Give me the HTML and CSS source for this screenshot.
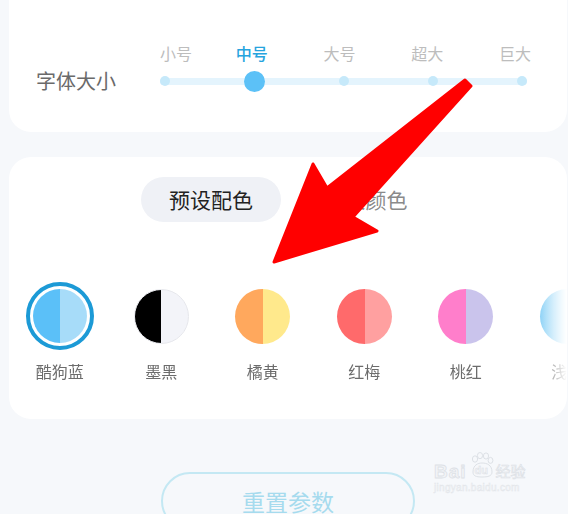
FILE: index.html
```html
<!DOCTYPE html>
<html lang="zh-CN">
<head>
    <meta charset="UTF-8">
    <meta name="viewport" content="width=device-width, initial-scale=1.0">
    <title>皮肤设置</title>
    <link rel="stylesheet" href="styles.css">
</head>
<body>
    <div class="page">
        <section class="card font-card">
            <div class="font-row">
                <span class="font-label">字体大小</span>
                <div class="slider">
                    <div class="slider-labels">
                        <span>小号</span>
                        <span class="active">中号</span>
                        <span>大号</span>
                        <span>超大</span>
                        <span>巨大</span>
                    </div>
                    <div class="slider-track">
                        <span class="stop"></span>
                        <span class="stop current"></span>
                        <span class="stop"></span>
                        <span class="stop"></span>
                        <span class="stop"></span>
                    </div>
                </div>
            </div>
        </section>

        <section class="card color-card">
            <div class="tabs">
                <span class="tab active">预设配色</span>
                <span class="tab">自定义颜色</span>
            </div>

            <div class="swatches">
                <div class="swatch selected">
                    <div class="swatch-ring"><span class="dot dot-blue"></span></div>
                    <span class="swatch-name">酷狗蓝</span>
                </div>
                <div class="swatch">
                    <div class="swatch-ring"><span class="dot dot-black"></span></div>
                    <span class="swatch-name">墨黑</span>
                </div>
                <div class="swatch">
                    <div class="swatch-ring"><span class="dot dot-orange"></span></div>
                    <span class="swatch-name">橘黄</span>
                </div>
                <div class="swatch">
                    <div class="swatch-ring"><span class="dot dot-red"></span></div>
                    <span class="swatch-name">红梅</span>
                </div>
                <div class="swatch">
                    <div class="swatch-ring"><span class="dot dot-pink"></span></div>
                    <span class="swatch-name">桃红</span>
                </div>
                <div class="swatch">
                    <div class="swatch-ring"><span class="dot dot-light"></span></div>
                    <span class="swatch-name">浅蓝</span>
                </div>
            </div>
        </section>

        <div class="actions">
            <button class="reset-btn">重置参数</button>
        </div>

        <!-- baidu watermark -->
        <div class="watermark">
            <div class="wm-top">
                <span class="wm-bai">Bai</span>
                <span class="wm-paw">
                    <svg width="26" height="26" viewBox="0 0 26 26">
                        <g fill="none" stroke="#dde1e6" stroke-width="1">
                            <ellipse cx="6" cy="7" rx="2.6" ry="3.2"/>
                            <ellipse cx="11" cy="3.6" rx="2.6" ry="3.1"/>
                            <ellipse cx="17" cy="4" rx="2.6" ry="3.1"/>
                            <ellipse cx="21.5" cy="8.4" rx="2.4" ry="3"/>
                            <path d="M4 20 C4 13 9 11 13 11 C18 11 23 13 23 20 C23 24 19 25 13 25 C7 25 4 24 4 20 Z"/>
                        </g>
                    </svg>
                    <span class="wm-du">du</span>
                </span>
                <span class="wm-jy">经验</span>
            </div>
            <div class="wm-url">jingyan.baidu.com</div>
        </div>

        <!-- red annotation arrow -->
        <svg class="arrow" width="568" height="514" viewBox="0 0 568 514">
            <path d="M465 80 L471 86 L353 217 L377 231 L274 262 L313 164 L327 188 Z"
                  fill="#ff0000" stroke="#ff0000" stroke-width="3" stroke-linejoin="round"/>
        </svg>
    </div>
</body>
</html>
```

FILE: styles.css
```css
html, body {
    overflow: hidden;
}

body {
    font-family: 'Noto Sans CJK SC', 'Noto Sans', sans-serif;
    margin: 0;
    padding: 0;
    background-color: #f6f8fb;
}

.page {
    display: flow-root;
    position: relative;
    width: 568px;
    height: 514px;
    padding: 0 1px 0 9px;
    box-sizing: border-box;
}

.card {
    background-color: #ffffff;
    border-radius: 22px;
}

/* font size */
.font-card {
    margin-top: -30px;
    padding: 73px 0 40px 27px;
}

.font-row {
    display: flex;
    align-items: flex-end;
}

.font-label {
    font-size: 20px;
    line-height: 22px;
    color: #6a6a6a;
    width: 80px;
    white-space: nowrap;
}

.slider {
    margin-left: 44px;
    width: 371px;
}

.slider-labels {
    display: flex;
    justify-content: space-between;
    font-size: 16px;
    line-height: 20px;
    color: #bdbdbd;
}

.slider-labels .active {
    color: #26a4de;
    font-weight: 500;
    margin-left: -12px;
}

.slider-track {
    position: relative;
    width: 367px;
    height: 22px;
    margin-top: 7px;
    display: flex;
    justify-content: space-between;
    align-items: center;
}

.slider-track::before {
    content: "";
    position: absolute;
    left: 0;
    right: 0;
    top: 8px;
    height: 7px;
    border-radius: 4px;
    background-color: #e4f4fd;
}

.stop {
    position: relative;
    width: 10px;
    height: 10px;
    border-radius: 50%;
    background-color: #c6e9fa;
}

.stop.current {
    width: 21px;
    height: 21px;
    margin: 0 -5.5px;
    background-color: #5cc1f7;
}

/* colour themes */
.color-card {
    margin-top: 25px;
    padding: 20px 0 37px;
    overflow: hidden;
}

.tabs {
    display: flex;
    gap: 4px;
    padding-left: 132px;
}

.tab {
    width: 140px;
    height: 45px;
    line-height: 45px;
    border-radius: 23px;
    text-align: center;
    font-size: 21px;
    color: #8a8a8a;
}

.tab.active {
    background-color: #eff1f6;
    color: #222;
}

.swatches {
    display: flex;
    margin-top: 60px;
    -webkit-mask-image: linear-gradient(to right, #000 95%, transparent 100%);
    mask-image: linear-gradient(to right, #000 95%, transparent 100%);
}

.swatch {
    flex: 0 0 101.5px;
    display: flex;
    flex-direction: column;
    align-items: center;
}

.swatch-ring {
    width: 68px;
    height: 68px;
    box-sizing: border-box;
    border-radius: 50%;
    display: flex;
    align-items: center;
    justify-content: center;
}

.swatch.selected .swatch-ring {
    border: 4px solid #1c9ad6;
}

.dot {
    width: 55px;
    height: 55px;
    border-radius: 50%;
    box-sizing: border-box;
}

.swatch.selected .dot {
    width: 54px;
    height: 54px;
}

.dot-blue   { background: linear-gradient(to right, #5bc0f8 50%, #a7dcf9 50%); }
.dot-black  { background: linear-gradient(to right, #000 50%, #f3f4f9 50%); border: 1px solid #e6e7ec; }
.dot-orange { background: linear-gradient(to right, #ffa85d 50%, #ffe98c 50%); }
.dot-red    { background: linear-gradient(to right, #ff6a6b 50%, #ffa0a0 50%); }
.dot-pink   { background: linear-gradient(to right, #ff7ecb 50%, #cac4ec 50%); }
.dot-light  { background: linear-gradient(to right, #8ad1f6, #ffffff); }

.swatch-name {
    margin-top: 10px;
    font-size: 16px;
    line-height: 22px;
    color: #6c6c6c;
}

/* reset */
.actions {
    margin-top: 53px;
    padding-left: 152px;
}

.reset-btn {
    width: 254px;
    height: 58px;
    border-radius: 29px;
    border: 2px solid #c4e8f3;
    background-color: transparent;
    font-family: inherit;
    font-size: 23px;
    color: #a6dbee;
    cursor: pointer;
}

/* watermark */
.watermark {
    position: absolute;
    left: 434px;
    top: 452px;
    color: #f2f4f7;
}

.wm-top {
    display: flex;
    align-items: flex-end;
}

.wm-bai {
    font-family: 'Liberation Sans', sans-serif;
    font-size: 19px;
    font-weight: bold;
    line-height: 20px;
    letter-spacing: 1px;
    -webkit-text-stroke: 0.8px #dde1e6;
}

.wm-paw {
    position: relative;
    width: 28px;
    height: 30px;
    margin-left: 1px;
}

.wm-paw svg {
    position: absolute;
    left: 1px;
    top: 0;
}

.wm-du {
    position: absolute;
    left: 7px;
    top: 12px;
    font-family: 'Liberation Sans', sans-serif;
    font-size: 11px;
    font-weight: bold;
    -webkit-text-stroke: 0.5px #dde1e6;
}

.wm-jy {
    font-size: 15px;
    line-height: 22px;
    -webkit-text-stroke: 0.6px #dde1e6;
}

.wm-url {
    font-family: 'Liberation Sans', sans-serif;
    font-size: 10px;
    line-height: 10px;
    margin-top: 1px;
    -webkit-text-stroke: 0.4px #e2e5e9;
    letter-spacing: 0.3px;
}

.arrow {
    position: absolute;
    left: 0;
    top: 0;
    pointer-events: none;
}
```
